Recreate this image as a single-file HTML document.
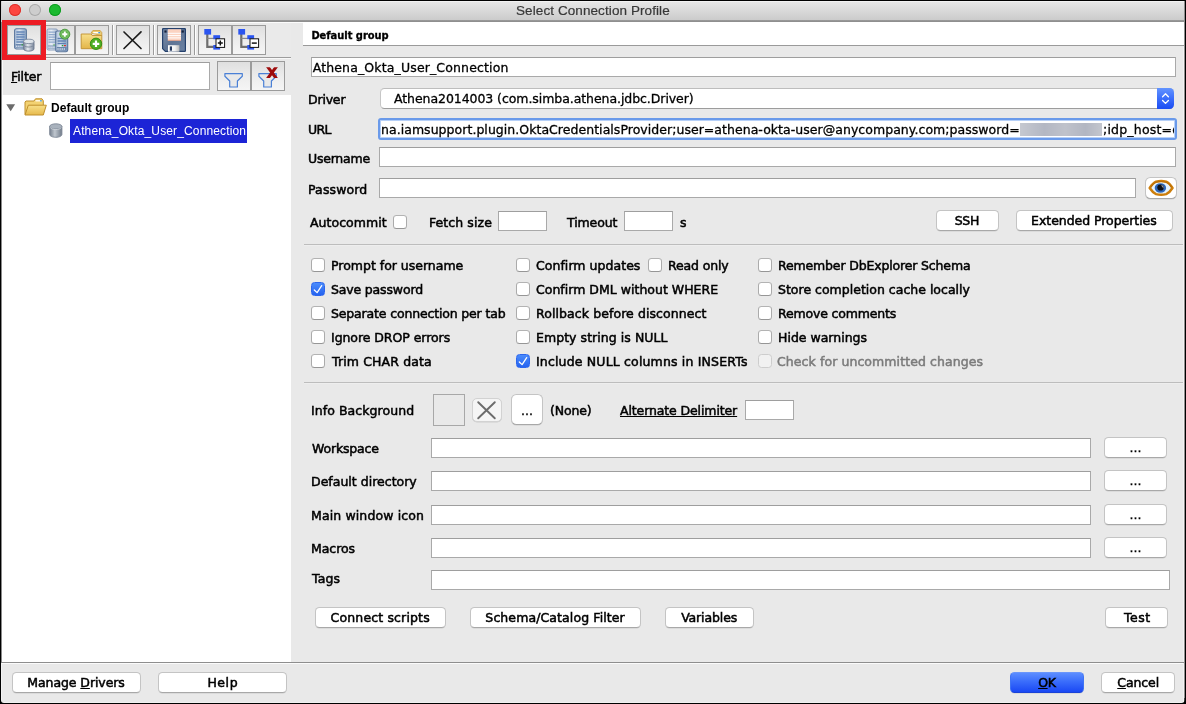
<!DOCTYPE html>
<html lang="en">
<head>
<meta charset="utf-8">
<title>Select Connection Profile</title>
<style>
*{box-sizing:border-box;margin:0;padding:0}
html,body{width:1186px;height:704px;overflow:hidden;background:#000}
body{position:relative;font-family:"DejaVu Sans","Liberation Sans",sans-serif;font-size:12.5px;line-height:16px;color:#000}
#win{position:absolute;left:0;top:0;width:1186px;height:704px;background:#e9e9e9;overflow:hidden;will-change:transform}
.abs,.t,.tf,.btn,.cb,.tb,.hl,.vl{position:absolute}
.t{white-space:nowrap;height:16px;line-height:16px;-webkit-text-stroke-width:.5px}
.tf{background:#fff;border:1px solid #a9a9a9;border-top-color:#9e9e9e}
.btn{background:#fff;border:1px solid #c4c4c4;border-bottom-color:#a8a8a8;border-radius:4.5px;text-align:center;white-space:nowrap;line-height:16px;box-shadow:0 .5px 0 rgba(0,0,0,.12)}
.btn span{position:relative;display:inline-block;-webkit-text-stroke-width:.5px}
.cb{width:14px;height:14px;background:#fff;border:1px solid #ababab;border-top-color:#b3b3b3;border-bottom-color:#969696;border-radius:3.5px}
.cb.on{border-color:#2c66ee;background:linear-gradient(#4a8bfb,#2563f0)}
.cb.dis{background:#f1f1f1;border-color:#cdcdcd}
.tb{width:34px;height:30px;border:1px solid #9b9b9b;background:linear-gradient(#dfdfdf,#ededed 55%,#f5f5f5)}
.hl{height:1px;background:#bdbdbd}
.sep{position:absolute;top:25px;width:2px;height:30px;background:linear-gradient(90deg,#9b9b9b 50%,#fff 50%)}
u{text-decoration:underline;text-underline-offset:.5px;text-decoration-thickness:1px}
svg{position:absolute;overflow:visible}
</style>
</head>
<body>
<div id="win">

<!-- ===== title bar ===== -->
<div id="titlebar" class="abs" style="left:0;top:0;width:1186px;height:20px;background:linear-gradient(#f2f2f2 0,#f2f2f2 2px,#e6e6e6 2px,#dcdcdc 45%,#cbcbcb)"></div>
<div class="abs" style="left:0;top:20px;width:1186px;height:2px;background:linear-gradient(#9c9c9c,#8b8b8b)"></div>
<div class="abs" style="left:9px;top:4px;width:12px;height:12px;border-radius:50%;background:#fc4741;box-shadow:inset 0 0 0 1px #dc332c"></div>
<div class="abs" style="left:29px;top:4px;width:12px;height:12px;border-radius:50%;background:#cdcdcd;box-shadow:inset 0 0 0 1px #aaa"></div>
<div class="abs" style="left:49px;top:4px;width:12px;height:12px;border-radius:50%;background:#1cba30;box-shadow:inset 0 0 0 1px #109c22"></div>
<div class="t" id="title" style="left:516px;top:3px;font-family:'Liberation Sans', sans-serif;font-size:13.5px;color:#383838;letter-spacing:0.089px;-webkit-text-stroke-width:0.2px">Select Connection Profile</div>

<!-- ===== left panel ===== -->
<div id="left" class="abs" style="left:0;top:22px;width:291px;height:640px;background:#e9e9e9"></div>
<div id="toolbar" class="abs" style="left:0;top:22px;width:291px;height:35px;background:#eaeaea"></div>
<div class="hl" style="left:0;top:22px;width:303px;background:#fcfcfc"></div>
<div class="hl" style="left:0;top:57px;width:291px;background:#9d9d9d"></div>
<div class="hl" style="left:0;top:58px;width:291px;background:#f8f8f8"></div>
<div id="tree" class="abs" style="left:0;top:95px;width:291px;height:567px;background:#fff"></div>

<!-- toolbar buttons -->
<div class="tb" style="left:41px;top:25px"></div>
<div class="abs" id="redbox" style="left:2px;top:20px;width:44px;height:40px;background:#ed1c24"></div>
<div class="tb" style="left:7px;top:25px"></div>
<div class="tb" style="left:75px;top:25px"></div>
<div class="sep" style="left:112px"></div>
<div class="tb" style="left:116px;top:25px"></div>
<div class="sep" style="left:153px"></div>
<div class="tb" style="left:157px;top:25px"></div>
<div class="sep" style="left:194px"></div>
<div class="tb" style="left:198px;top:25px"></div>
<div class="tb" style="left:232px;top:25px"></div>

<!-- icon: server + database -->
<svg id="ic1" style="left:13px;top:28px" width="24" height="24" viewBox="0 0 24 24">
 <defs>
  <linearGradient id="gsrv" x1="0" y1="0" x2="1" y2="0"><stop offset="0" stop-color="#a9bdd6"/><stop offset=".4" stop-color="#dfe8f2"/><stop offset="1" stop-color="#86a0c1"/></linearGradient>
  <linearGradient id="gsrv2" x1="0" y1="0" x2="1" y2="0"><stop offset="0" stop-color="#c3d0e0"/><stop offset=".4" stop-color="#e9eef5"/><stop offset="1" stop-color="#a9bad0"/></linearGradient>
  <linearGradient id="gdb" x1="0" y1="0" x2="1" y2="0"><stop offset="0" stop-color="#78859a"/><stop offset=".4" stop-color="#e6eaef"/><stop offset="1" stop-color="#76839a"/></linearGradient>
 </defs>
 <rect x="1.600" y=".8" width="11.800" height="20.200" rx="1.800" fill="url(#gsrv)" stroke="#5c789e" stroke-width="1.100"/>
 <g stroke="#6486b8" stroke-width="1.300"><path d="M3.300 4h8.400M3.300 6.500h8.400M3.300 9h8.400M3.300 11.500h8.400M3.300 14h8.400"/></g>
 <rect x="2.600" y="16" width="9.800" height="3.700" fill="#6d89af"/>
 <path d="M3.200 18.300h8" stroke="#e8eef6" stroke-width="1.600" stroke-dasharray="1.200 .9"/>
 <rect x="8.600" y="16.200" width="1.500" height="1.200" fill="#35a535"/>
 <path d="M10.600 13.400v7.500c0 1.250 2.300 2.250 5.200 2.250s5.200-1 5.200-2.250v-7.500z" fill="url(#gdb)" stroke="#6f7c90" stroke-width=".9"/>
 <path d="M10.600 16.800c0 1.250 2.300 2.250 5.200 2.250s5.200-1 5.200-2.250" fill="none" stroke="#7d8a9d" stroke-width="1"/>
 <ellipse cx="15.800" cy="13.400" rx="5.200" ry="2.200" fill="#dfe4ea" stroke="#7d8a9d" stroke-width=".9"/>
</svg>

<!-- icon: two servers + plus -->
<svg id="ic2" style="left:46px;top:28px" width="26" height="24" viewBox="0 0 26 24">
 <rect x="1" y="1" width="10.500" height="21" rx="1.500" fill="url(#gsrv2)" stroke="#8a9fbd" stroke-width="1"/>
 <g stroke="#8fa9cc" stroke-width="1.200"><path d="M2.500 4.200h7.500M2.500 6.700h7.500M2.500 9.200h7.500M2.500 11.700h7.500M2.500 14.200h7.500"/></g>
 <rect x="2" y="17.300" width="8" height="3.400" fill="#8ea4c2"/>
 <path d="M2.500 19.300h7" stroke="#e8eef6" stroke-width="1.500" stroke-dasharray="1.100 .9"/>
 <rect x="7.400" y="16.400" width="1.300" height="1.100" fill="#39a539"/>
 <rect x="9.700" y="3" width="12" height="20.700" rx="1.600" fill="url(#gsrv)" stroke="#58749b" stroke-width="1.100"/>
 <g stroke="#5d80b3" stroke-width="1.300"><path d="M11.500 10.500h8.400M11.500 13h8.400M11.500 15.500h8.400"/></g>
 <rect x="10.800" y="19" width="9.800" height="3.700" fill="#6784ab"/>
 <path d="M11.400 21h8.400" stroke="#e8eef6" stroke-width="1.600" stroke-dasharray="1.200 .9"/>
 <rect x="15.800" y="17" width="1.500" height="1.200" fill="#2f9a2f"/><rect x="18" y="17" width="1.900" height="1.200" fill="#dc2f2f"/>
 <circle cx="18.800" cy="6.200" r="5" fill="#62b251" stroke="#46963a" stroke-width=".9"/>
 <circle cx="18.800" cy="6.200" r="3.900" fill="none" stroke="#8fd07f" stroke-width=".7" opacity=".7"/>
 <path d="M18.800 3.600v5.200M16.200 6.200h5.200" stroke="#fff" stroke-width="1.900"/>
</svg>

<!-- icon: folder + plus -->
<svg id="ic3" style="left:80px;top:28px" width="24" height="24" viewBox="0 0 24 24">
 <defs><linearGradient id="gfo" x1="0" y1="0" x2="0" y2="1"><stop offset="0" stop-color="#f7df8c"/><stop offset="1" stop-color="#e3b548"/></linearGradient></defs>
 <path d="M11 5l1.800-2.400h7.400l1.600 2v3z" fill="#f1cf73" stroke="#c7983a" stroke-width=".8"/>
 <rect x="13.300" y="4" width="6.500" height="1.300" fill="#fff"/><rect x="18.300" y="4" width="1.800" height="1.300" fill="#3f9be8"/>
 <path d="M1.200 6h10l1 1.500h9.600v13.200h-20.600z" fill="url(#gfo)" stroke="#c0902f" stroke-width=".9"/>
 <circle cx="16" cy="15.800" r="5.700" fill="#4fae22" stroke="#2f8a12" stroke-width=".9"/>
 <path d="M16 12.500v6.600M12.700 15.800h6.600" stroke="#fff" stroke-width="2.200"/>
</svg>

<!-- icon: X -->
<svg id="ic4" style="left:123px;top:31px" width="19" height="18" viewBox="0 0 19 18">
 <path d="M1 1l17 16.500M18 .8l-17 16.700" stroke="#1c1c1c" stroke-width="1.650" stroke-linecap="round"/>
</svg>

<!-- icon: floppy -->
<svg id="ic5" style="left:162px;top:28px" width="24" height="24" viewBox="0 0 24 24">
 <defs><linearGradient id="gfl" x1="0" y1="0" x2="1" y2="1"><stop offset="0" stop-color="#7d90ad"/><stop offset=".5" stop-color="#5f7494"/><stop offset="1" stop-color="#6d83a4"/></linearGradient>
 <linearGradient id="gsh" x1="0" y1="0" x2="1" y2="0"><stop offset="0" stop-color="#fff"/><stop offset=".6" stop-color="#f2f2f2"/><stop offset="1" stop-color="#b9b9b9"/></linearGradient></defs>
 <path d="M1.300.600h21.400a.7.700 0 0 1 .7.700v21.400a.7.700 0 0 1-.7.700h-19.400l-2.700-2.700v-19.400a.7.700 0 0 1 .7-.7z" fill="url(#gfl)" stroke="#24406c" stroke-width="1.200" stroke-linejoin="round"/>
 <rect x="5.800" y="1.200" width="13.200" height="11.200" fill="#fbd3c1"/>
 <g stroke="#fff" stroke-width="1"><path d="M5.800 5.300h13.200M5.800 7.600h13.200M5.800 9.900h13.200"/></g>
 <rect x="5.800" y="12" width="13.200" height=".8" fill="#e8a78f"/>
 <rect x="2.400" y="2.400" width="2.200" height="2.200" fill="#14203a"/><rect x="19.600" y="2.400" width="2.200" height="2.200" fill="#14203a"/>
 <rect x="6" y="17.200" width="11.400" height="6.500" fill="url(#gsh)"/>
 <rect x="7.800" y="18.400" width="2.200" height="4.300" fill="#263a60"/>
</svg>

<!-- icon: expand tree -->
<svg id="ic6" style="left:203px;top:28px" width="24" height="24" viewBox="0 0 24 24">
 <path d="M4.300 6v12.800h7" fill="none" stroke="#6e6e6e" stroke-width="2.200"/><path d="M4.300 10.400h7" fill="none" stroke="#8a8a8a" stroke-width="1.200"/>
 <rect x="1.300" y="1" width="6.800" height="5.600" fill="#2b55f0"/>
 <rect x="10.300" y="7.200" width="6.800" height="4" fill="#2b55f0"/>
 <rect x="10.300" y="17" width="6.800" height="4.600" fill="#2b55f0"/>
 <rect x="13" y="10.800" width="8.600" height="8.600" fill="#fff" stroke="#111" stroke-width="1"/>
 <path d="M14.800 15.100h5M17.300 12.600v5" stroke="#111" stroke-width="1.500"/>
</svg>

<!-- icon: collapse tree -->
<svg id="ic7" style="left:237px;top:28px" width="24" height="24" viewBox="0 0 24 24">
 <path d="M4.300 6v12.800h7" fill="none" stroke="#6e6e6e" stroke-width="2.200"/><path d="M4.300 10.400h7" fill="none" stroke="#8a8a8a" stroke-width="1.200"/>
 <rect x="1.300" y="1" width="6.800" height="5.600" fill="#2b55f0"/>
 <rect x="10.300" y="7.200" width="6.800" height="4" fill="#2b55f0"/>
 <rect x="10.300" y="17" width="6.800" height="4.600" fill="#2b55f0"/>
 <rect x="13" y="10.800" width="8.600" height="8.600" fill="#fff" stroke="#111" stroke-width="1"/>
 <path d="M14.800 15.100h5" stroke="#111" stroke-width="1.500"/>
</svg>

<!-- filter row -->
<div class="t" style="left:11px;top:69px;letter-spacing:-0.117px"><u>F</u>ilter</div>
<div class="tf" style="left:50px;top:62px;width:160px;height:28px"></div>
<div class="tb" style="left:217px;top:61px;width:34px;height:30px"></div>
<div class="tb" style="left:251px;top:61px;width:34px;height:30px"></div>
<svg id="ic8" style="left:224px;top:72px" width="20" height="16" viewBox="0 0 20 16">
 <path d="M.9 1.600h17.400v2.700l-4.900 4.700v6h-7.700v-6l-4.800-4.700z" fill="#e9e9e9" stroke="#4a80d6" stroke-width="1.200" stroke-linejoin="round"/>
</svg>
<svg id="ic9" style="left:258px;top:72px" width="20" height="16" viewBox="0 0 20 16">
 <path d="M.9 1.600h17.400v2.700l-4.900 4.700v6h-7.700v-6l-4.800-4.700z" fill="#e9e9e9" stroke="#4a80d6" stroke-width="1.200" stroke-linejoin="round"/>
</svg>
<svg id="ic9x" style="left:266px;top:67px" width="12" height="11" viewBox="0 0 12 11">
 <defs><clipPath id="cpx"><rect x="0" y=".2" width="12" height="10.800"/></clipPath></defs>
 <g clip-path="url(#cpx)" stroke="#9e0b0b" stroke-width="3.100"><line x1="1" y1="-1.200" x2="11" y2="12.400"/><line x1="11" y1="-1.200" x2="1" y2="12.400"/></g>
</svg>

<!-- tree -->
<svg id="tri" style="left:6px;top:104px" width="10" height="8" viewBox="0 0 10 8"><path d="M.3.300h8.800l-4.400 7z" fill="#6b6b6b"/></svg>
<svg id="fold" style="left:24px;top:98px" width="23" height="18" viewBox="0 0 23 18">
 <defs><linearGradient id="gf2" x1="0" y1="0" x2="0" y2="1"><stop offset="0" stop-color="#f8e08a"/><stop offset="1" stop-color="#e6b94c"/></linearGradient></defs>
 <path d="M1 16.500v-12.500l1-1h8l1.500-2.200h6.500l1.300 2v4.200" fill="#f3d272" stroke="#bf8f2c" stroke-width="1"/>
 <rect x="11.500" y="2.200" width="6" height="1.200" fill="#fff"/><rect x="16" y="2.200" width="1.800" height="1.200" fill="#3f9be8"/>
 <path d="M4.300 7.200h18l-3 9.800h-18.300z" fill="url(#gf2)" stroke="#bf8f2c" stroke-width="1" stroke-linejoin="round"/>
</svg>
<div class="t" style="left:51px;top:100px;font-family:'Liberation Sans', sans-serif;font-size:12px;font-weight:bold;letter-spacing:0.025px;-webkit-text-stroke-width:0px">Default group</div>
<svg id="dbi" style="left:49px;top:123px" width="14" height="15" viewBox="0 0 14 15">
 <defs><linearGradient id="gdb2" x1="0" y1="0" x2="1" y2="0"><stop offset="0" stop-color="#75808e"/><stop offset=".42" stop-color="#bfc6ce"/><stop offset="1" stop-color="#707b89"/></linearGradient></defs>
 <path d="M.7 3.300v8.200c0 1.600 2.800 2.800 6.100 2.800s6.100-1.200 6.100-2.800v-8.200z" fill="url(#gdb2)" stroke="#7b8593" stroke-width=".9"/>
 <ellipse cx="6.800" cy="3.400" rx="6.100" ry="2.600" fill="#a9b2bd" stroke="#7f8997" stroke-width=".9"/>
 <path d="M1.300 4.600c1 1.300 3 1.900 5.500 1.900s4.500-.6 5.500-1.900" fill="none" stroke="#d5dae0" stroke-width=".8"/>
</svg>
<div class="abs" style="left:70px;top:119px;width:177px;height:24px;background:#1c24d6"></div>
<div class="t" style="left:73px;top:123px;font-family:'Liberation Sans', sans-serif;font-size:12px;color:#fff;letter-spacing:0.135px;-webkit-text-stroke-width:0px">Athena_Okta_User_Connection</div>

<!-- ===== right panel ===== -->
<div id="hdr" class="abs" style="left:303px;top:22px;width:883px;height:23px;background:#fff"></div>
<div class="hl" style="left:303px;top:45px;width:883px;background:#9a9a9a"></div>
<div class="t" style="left:311.4px;top:28px;font-family:'DejaVu Sans Condensed', 'DejaVu Sans', sans-serif;font-size:11px;font-weight:bold;letter-spacing:-0.01px;-webkit-text-stroke-width:0.3px">Default group</div>

<div class="tf" style="left:311px;top:57px;width:865px;height:20px"></div>
<div class="t" style="left:312.7px;top:60px;letter-spacing:0.14px;-webkit-text-stroke-width:.3px">Athena_Okta_User_Connection</div>

<div class="t" style="left:308px;top:92px;letter-spacing:-0.19px">Driver</div>
<div id="combo" class="abs" style="left:380px;top:88px;width:794px;height:21px;background:#fff;border:1px solid #c6c6c6;border-top-color:#bdbdbd;border-bottom-color:#9c9c9c;border-radius:4.500px"></div>
<div class="abs" style="left:1157px;top:88px;width:17px;height:21px;background:linear-gradient(#6394ff,#3f72fc 45%,#1b4cf3);border-radius:0 4.500px 4.500px 0"></div>
<svg style="left:1161px;top:92px" width="9" height="14" viewBox="0 0 9 14"><path d="M1.600 4.700l2.900-2.900l2.900 2.900M1.600 8.500l2.900 2.900l2.900-2.900" fill="none" stroke="#fff" stroke-width="1.300" stroke-linecap="round" stroke-linejoin="round"/></svg>
<div class="t" style="left:394px;top:91px;letter-spacing:-0.068px;-webkit-text-stroke-width:.3px">Athena2014003 (com.simba.athena.jdbc.Driver)</div>

<div class="t" style="left:308px;top:122px;letter-spacing:-0.664px">URL</div>
<div id="url" class="abs" style="left:378px;top:118px;width:798.500px;height:21.800px;background:#fff;border:2px solid #6a9aea;border-radius:3px;box-shadow:inset 0 0 0 1px #b6d0f8"></div>
<div id="urltext" class="abs" style="left:381px;top:120px;width:793px;height:18px;overflow:hidden;-webkit-text-stroke-width:.3px">
 <div class="t" style="left:0;top:2px;letter-spacing:0.04px;-webkit-text-stroke-width:.3px">na.iamsupport.plugin.OktaCredentialsProvider;user=athena-okta-user@anycompany.com;password=</div>
 <div class="abs" style="left:639px;top:3px;width:82px;height:13px;background:linear-gradient(90deg,#c5c8d0,#b3b7c3 30%,#bfc2cb 55%,#b2b6c2 80%,#c3c6ce);filter:blur(.7px)"></div>
 <div class="t" style="left:722px;top:2px;letter-spacing:.2px;-webkit-text-stroke-width:.3px">;idp_host=d</div>
</div>

<div class="t" style="left:308px;top:151px;letter-spacing:-0.231px">Username</div>
<div class="tf" style="left:379px;top:147px;width:797px;height:20px"></div>

<div class="t" style="left:308px;top:182px;letter-spacing:0.13px">Password</div>
<div class="tf" style="left:379px;top:178px;width:757px;height:20px"></div>
<div class="btn" style="left:1145px;top:177px;width:32px;height:22px;border-radius:5.500px"></div>
<svg id="eye" style="left:1148px;top:179px" width="26" height="18" viewBox="0 0 26 18">
 <path d="M1.700 9c1.800-2.800 3.800-5.300 6.300-6.300c3.400-.8 7-.8 10.200 0c2.500 1 4.600 3.500 6.300 6.300c-1.700 2.700-3.800 5-6.300 6.100c-3.300.9-6.800.9-10.200 0c-2.500-1.100-4.500-3.400-6.300-6.100z" fill="#e4f2fd" stroke="#cd7e0b" stroke-width="2.500" stroke-linejoin="round"/>
 <path d="M2.500 8.200c1.700-2.500 3.500-4.400 5.800-5.200c3.200-.7 6.400-.7 9.600 0c2.200.8 4.100 2.700 5.700 5.200" fill="none" stroke="#b96d06" stroke-width="1.100"/>
 <ellipse cx="12.400" cy="9" rx="5.700" ry="4.800" fill="#2c66ba"/>
 <ellipse cx="12.600" cy="8.500" rx="3.300" ry="3.100" fill="#0c0f16"/>
 <path d="M13 6.200l2.300.3l.4 3.200z" fill="#9aa0a8"/>
</svg>

<div class="t" style="left:310px;top:215px;letter-spacing:0.042px">Autocommit</div>
<div class="cb" style="left:393px;top:215px"></div>
<div class="t" style="left:429px;top:215px;letter-spacing:0.083px">Fetch size</div>
<div class="tf" style="left:498px;top:211px;width:49px;height:20px"></div>
<div class="t" style="left:567px;top:215px;letter-spacing:-0.097px">Timeout</div>
<div class="tf" style="left:624px;top:211px;width:49px;height:20px"></div>
<div class="t" style="left:680px;top:215px">s</div>
<div class="btn" style="left:936px;top:210px;width:63px;height:21px;padding-top:2px"><span style="letter-spacing:-0.28px;left:-0.6px">SSH</span></div>
<div class="btn" style="left:1016px;top:210px;width:157px;height:21px;padding-top:2px"><span style="letter-spacing:-0.05px;left:-0.6px">Extended Properties</span></div>

<div class="hl" style="left:304px;top:244px;width:880px"></div><div class="hl" style="left:304px;top:245px;width:880px;background:#eee"></div>

<!-- checkboxes -->
<div class="cb" style="left:311px;top:258px"></div><div class="t" style="left:331px;top:258px;letter-spacing:-0.01px">Prompt for username</div>
<div class="cb on" style="left:311px;top:282px"></div><div class="t" style="left:331px;top:282px;letter-spacing:-0.161px">Save password</div>
<div class="cb" style="left:311px;top:306px"></div><div class="t" style="left:331px;top:306px;letter-spacing:-0.156px">Separate connection per tab</div>
<div class="cb" style="left:311px;top:330px"></div><div class="t" style="left:331px;top:330px;letter-spacing:-0.059px">Ignore DROP errors</div>
<div class="cb" style="left:311px;top:354px"></div><div class="t" style="left:332px;top:354px;letter-spacing:0.13px">Trim CHAR data</div>

<div class="cb" style="left:516px;top:258px"></div><div class="t" style="left:536px;top:258px;letter-spacing:0.042px">Confirm updates</div>
<div class="cb" style="left:648px;top:258px"></div><div class="t" style="left:668px;top:258px;letter-spacing:-0.133px">Read only</div>
<div class="cb" style="left:516px;top:282px"></div><div class="t" style="left:536px;top:282px;letter-spacing:0.013px">Confirm DML without WHERE</div>
<div class="cb" style="left:516px;top:306px"></div><div class="t" style="left:536px;top:306px;letter-spacing:0.084px">Rollback before disconnect</div>
<div class="cb" style="left:516px;top:330px"></div><div class="t" style="left:536px;top:330px;letter-spacing:0.049px">Empty string is NULL</div>
<div class="cb on" style="left:516px;top:354px"></div><div class="t" style="left:536px;top:354px;letter-spacing:0.166px">Include NULL columns in INSERTs</div>

<div class="cb" style="left:758px;top:258px"></div><div class="t" style="left:778px;top:258px;letter-spacing:-0.154px">Remember DbExplorer Schema</div>
<div class="cb" style="left:758px;top:282px"></div><div class="t" style="left:778px;top:282px;letter-spacing:0.007px">Store completion cache locally</div>
<div class="cb" style="left:758px;top:306px"></div><div class="t" style="left:778px;top:306px;letter-spacing:-0.172px">Remove comments</div>
<div class="cb" style="left:758px;top:330px"></div><div class="t" style="left:778px;top:330px;letter-spacing:0.003px">Hide warnings</div>
<div class="cb dis" style="left:758px;top:354px"></div><div class="t" style="left:777px;top:354px;color:#7b7b7b;letter-spacing:0.082px">Check for uncommitted changes</div>

<svg class="chk" style="left:313px;top:285px" width="10" height="9" viewBox="0 0 10 9"><path d="M1.300 5l2.800 2.600l4.600-7" fill="none" stroke="#fff" stroke-width="1.250" stroke-linecap="round" stroke-linejoin="round"/></svg>
<svg class="chk" style="left:518px;top:357px" width="10" height="9" viewBox="0 0 10 9"><path d="M1.300 5l2.800 2.600l4.600-7" fill="none" stroke="#fff" stroke-width="1.250" stroke-linecap="round" stroke-linejoin="round"/></svg>

<div class="hl" style="left:304px;top:382px;width:880px"></div><div class="hl" style="left:304px;top:383px;width:880px;background:#eee"></div>

<!-- info background row -->
<div class="t" style="left:311px;top:403px;letter-spacing:0.062px">Info Background</div>
<div class="abs" style="left:433px;top:394px;width:32px;height:32px;border:1px solid #a8a8a8;background:#e9e9e9"></div>
<div class="btn" style="left:472px;top:398px;width:30px;height:24px;background:#f5f5f5;border-color:#d2d2d2;border-radius:5px"></div>
<svg style="left:477px;top:401px" width="19" height="18" viewBox="0 0 19 18"><path d="M1.200 1.200l16.600 16.100M17.800 1.200l-16.600 16.100" stroke="#6c6c6c" stroke-width="1.900" stroke-linecap="round"/></svg>
<div class="btn" style="left:511px;top:394px;width:32px;height:31px;border-radius:5.500px;padding-top:8px"><span style="letter-spacing:-.05px;-webkit-text-stroke-width:.3px">...</span></div>
<div class="t" style="left:550px;top:403px;letter-spacing:-0.162px">(None)</div>
<div class="t" style="left:620px;top:403px;letter-spacing:-0.115px"><u>Alternate Delimiter</u></div>
<div class="tf" style="left:745px;top:400px;width:49px;height:20px"></div>

<!-- path rows -->
<div class="t" style="left:312px;top:441px;letter-spacing:-0.17px">Workspace</div>
<div class="tf" style="left:431px;top:438px;width:660px;height:20px"></div>
<div class="btn" style="left:1104px;top:437px;width:63px;height:21px;padding-top:2px"><span style="letter-spacing:-.05px;-webkit-text-stroke-width:.3px">...</span></div>

<div class="t" style="left:311px;top:474px;letter-spacing:0.012px">Default directory</div>
<div class="tf" style="left:431px;top:471px;width:660px;height:20px"></div>
<div class="btn" style="left:1104px;top:470px;width:63px;height:21px;padding-top:2px"><span style="letter-spacing:-.05px;-webkit-text-stroke-width:.3px">...</span></div>

<div class="t" style="left:311px;top:508px;letter-spacing:0.121px">Main window icon</div>
<div class="tf" style="left:431px;top:505px;width:660px;height:20px"></div>
<div class="btn" style="left:1104px;top:504px;width:63px;height:21px;padding-top:2px"><span style="letter-spacing:-.05px;-webkit-text-stroke-width:.3px">...</span></div>

<div class="t" style="left:311px;top:541px;letter-spacing:-0.058px">Macros</div>
<div class="tf" style="left:431px;top:538px;width:660px;height:20px"></div>
<div class="btn" style="left:1104px;top:537px;width:63px;height:21px;padding-top:2px"><span style="letter-spacing:-.05px;-webkit-text-stroke-width:.3px">...</span></div>

<div class="t" style="left:312px;top:571px;letter-spacing:0.152px">Tags</div>
<div class="tf" style="left:431px;top:570px;width:739px;height:20px"></div>

<!-- action buttons -->
<div class="btn" style="left:315px;top:607px;width:131px;height:21px;padding-top:2px"><span style="letter-spacing:0.15px;left:-0.3px">Connect scripts</span></div>
<div class="btn" style="left:470px;top:607px;width:171px;height:21px;padding-top:2px"><span style="letter-spacing:0.1px;left:-0.4px">Schema/Catalog Filter</span></div>
<div class="btn" style="left:665px;top:607px;width:89px;height:21px;padding-top:2px"><span style="letter-spacing:-0.13px;left:-0.4px">Variables</span></div>
<div class="btn" style="left:1105px;top:607px;width:63px;height:21px;padding-top:2px"><span style="letter-spacing:0.46px;left:0.8px">Test</span></div>

<!-- ===== bottom bar ===== -->
<div class="hl" style="left:0;top:662px;width:1186px;background:#8e8e8e"></div>
<div class="hl" style="left:0;top:663px;width:1186px;background:#fbfbfb"></div>
<div class="btn" style="left:12px;top:672px;width:129px;height:21px;padding-top:2px"><span style="letter-spacing:-0.08px;left:-0.5px">Manage <u>D</u>rivers</span></div>
<div class="btn" style="left:158px;top:672px;width:129px;height:21px;padding-top:2px"><span style="letter-spacing:0.58px;left:0.3px">Help</span></div>
<div class="btn" id="ok" style="left:1010px;top:672px;width:74px;height:21px;padding-top:2px;background:linear-gradient(#5c8dff,#3a6dfb 45%,#1a48f4);border-color:#3f73f4;border-top-color:#6a96fb;border-bottom-color:#1a43d8"><span style="letter-spacing:-.35px;left:-.2px"><u>O</u>K</span></div>
<div class="btn" style="left:1101px;top:672px;width:74px;height:21px;padding-top:2px"><span style="letter-spacing:-0.08px;left:0.2px"><u>C</u>ancel</span></div>

<!-- ===== window frame ===== -->
<div class="abs" style="left:2px;top:60px;width:1px;height:35px;background:#fafafa"></div>
<div class="abs" style="left:1183px;top:46px;width:1px;height:616px;background:#f3f3f3"></div>
<div class="abs" style="left:1183px;top:663px;width:1px;height:39px;background:#f3f3f3"></div>
<div class="abs" style="left:1px;top:702px;width:1184px;height:1px;background:#f0f0f0"></div>
<div class="abs" style="left:0;top:0;width:1186px;height:1px;background:#000"></div>
<div class="abs" style="left:0;top:0;width:1px;height:704px;background:#000"></div>
<div class="abs" style="left:1px;top:1px;width:1px;height:21px;background:#d4d4d4"></div>
<div class="abs" style="left:1px;top:22px;width:1px;height:641px;background:#8a8a8a"></div>
<div class="abs" style="left:1px;top:663px;width:1px;height:39px;background:#f2f2f2"></div>
<div class="abs" style="left:1184px;top:1px;width:1px;height:702px;background:#8f8f8f"></div>
<div class="abs" style="left:1185px;top:0;width:1px;height:704px;background:#000"></div>
<div class="abs" style="left:0;top:703px;width:1186px;height:1px;background:#000"></div>
<svg style="left:0;top:698px" width="6" height="6" viewBox="0 0 6 6"><path d="M0 0v6h6v-1h-2a3 3 0 0 1-3-3v-2z" fill="#000"/></svg>
<svg style="left:1180px;top:698px" width="6" height="6" viewBox="0 0 6 6"><path d="M6 0v6h-6v-1h1.500a3 3 0 0 0 3-3v-2z" fill="#000"/></svg>
</div>
</body>
</html>
